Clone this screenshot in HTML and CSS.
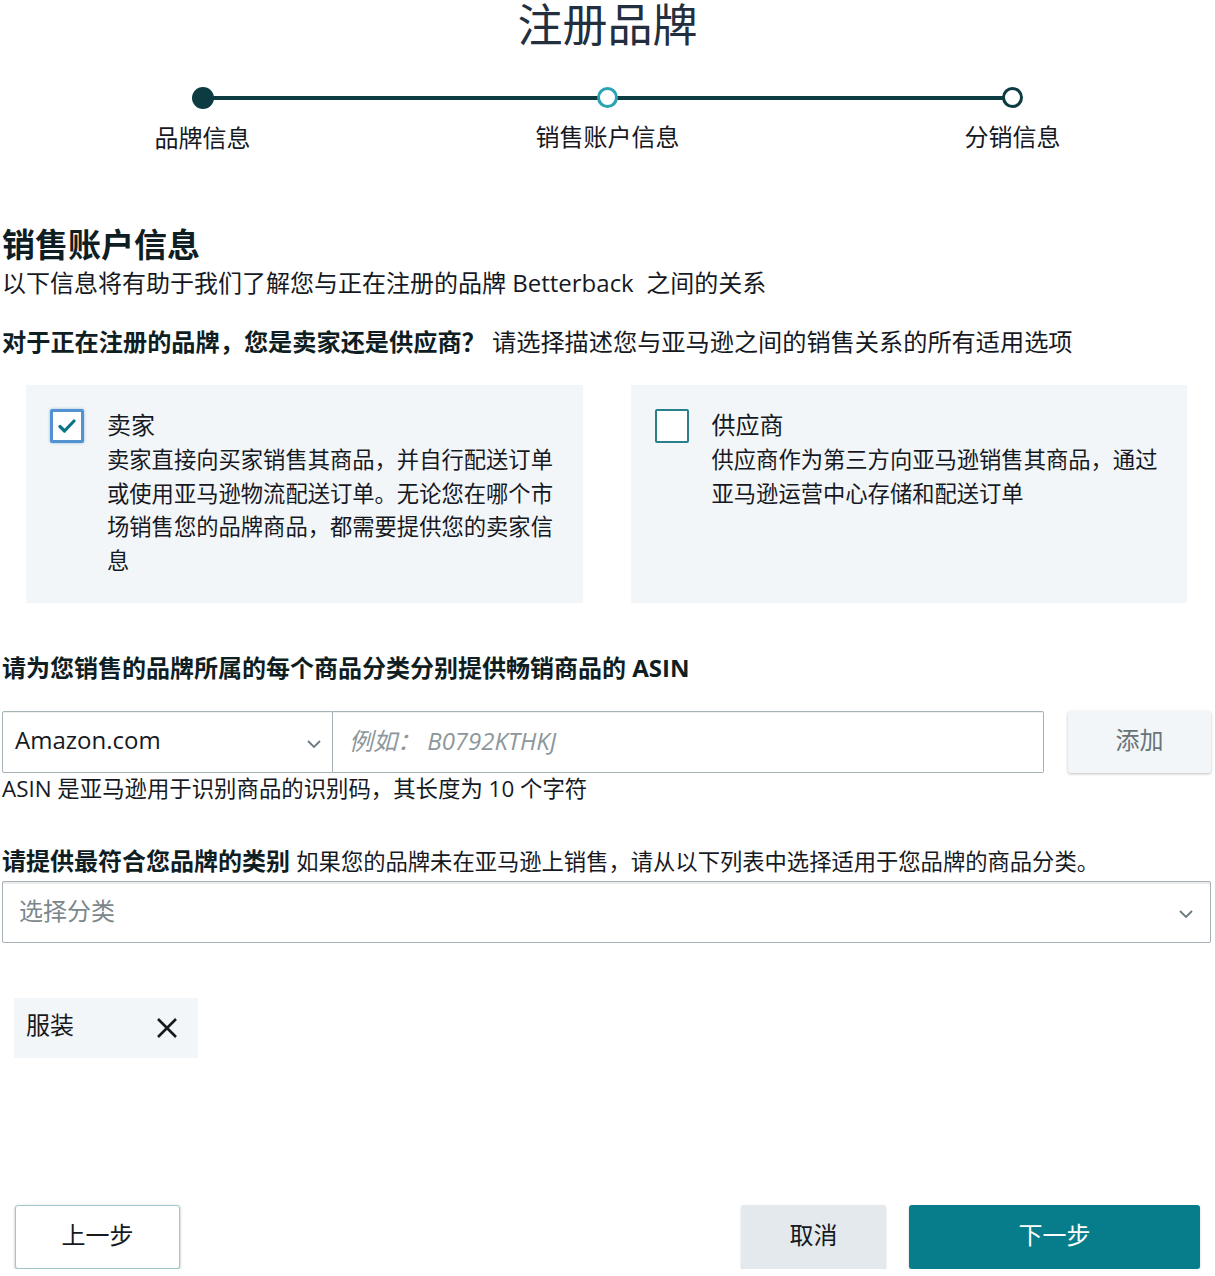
FILE: index.html
```html
<!DOCTYPE html>
<html lang="zh-CN">
<head>
<meta charset="utf-8">
<title>注册品牌</title>
<link rel="stylesheet" href="styles.css">
</head>
<body>
<div class="page">
  <h1 class="title">注册品牌</h1>

  <div class="stepper">
    <div class="step done"><span class="dot"></span><span class="step-label">品牌信息</span></div>
    <div class="step current"><span class="dot"></span><span class="step-label">销售账户信息</span></div>
    <div class="step todo"><span class="dot"></span><span class="step-label">分销信息</span></div>
  </div>

  <section class="form">
    <h2 class="section-title">销售账户信息</h2>
    <p class="subtitle">以下信息将有助于我们了解您与正在注册的品牌 Betterback&nbsp; 之间的关系</p>

    <p class="question"><strong>对于正在注册的品牌，您是卖家还是供应商？</strong> 请选择描述您与亚马逊之间的销售关系的所有适用选项</p>

    <div class="cards">
      <div class="card">
        <span class="checkbox checked">
          <svg viewBox="0 0 24 24" width="24" height="24"><path d="M5 12.5l4.5 4.5L19 7" fill="none" stroke="#0b7386" stroke-width="3.2" stroke-linecap="round" stroke-linejoin="round"/></svg>
        </span>
        <div class="card-body">
          <div class="card-title">卖家</div>
          <div class="card-desc">卖家直接向买家销售其商品，并自行配送订单或使用亚马逊物流配送订单。无论您在哪个市场销售您的品牌商品，都需要提供您的卖家信息</div>
        </div>
      </div>
      <div class="card">
        <span class="checkbox"></span>
        <div class="card-body">
          <div class="card-title">供应商</div>
          <div class="card-desc">供应商作为第三方向亚马逊销售其商品，通过亚马逊运营中心存储和配送订单</div>
        </div>
      </div>
    </div>

    <p class="question q-asin"><strong>请为您销售的品牌所属的每个商品分类分别提供畅销商品的 ASIN</strong></p>

    <div class="asin-row">
      <div class="field-group">
        <div class="select market">
          <span class="lift">Amazon.com</span>
          <svg class="chev" viewBox="0 0 16 10" width="16" height="10"><path d="M2 2l6 6 6-6" fill="none" stroke="#6b7a80" stroke-width="1.8"/></svg>
        </div>
        <div class="asin-input"><span class="placeholder lift">例如：&nbsp;B0792KTHKJ</span></div>
      </div>
      <button class="btn btn-add" type="button">添加</button>
    </div>
    <p class="help">ASIN 是亚马逊用于识别商品的识别码，其长度为 10 个字符</p>

    <p class="question q-cat"><strong>请提供最符合您品牌的类别</strong> <span class="q-note">如果您的品牌未在亚马逊上销售，请从以下列表中选择适用于您品牌的商品分类。</span></p>
    <div class="select category">
      <span class="placeholder-plain lift">选择分类</span>
      <svg class="chev" viewBox="0 0 16 10" width="16" height="10"><path d="M2 2l6 6 6-6" fill="none" stroke="#6b7a80" stroke-width="1.8"/></svg>
    </div>

    <div class="tags">
      <span class="tag"><span class="lift">服装</span>
        <svg class="tag-x" viewBox="0 0 22 22" width="22" height="22"><path d="M2 2l18 18M20 2L2 20" fill="none" stroke="#16191f" stroke-width="2.6"/></svg>
      </span>
    </div>

    <div class="actions">
      <button class="btn btn-prev" type="button">上一步</button>
      <div class="actions-right">
        <button class="btn btn-cancel" type="button">取消</button>
        <button class="btn btn-next" type="button">下一步</button>
      </div>
    </div>
  </section>
</div>
</body>
</html>
```

FILE: styles.css
```css
html, body {
  margin: 0;
  padding: 0;
  background: #ffffff;
}

body {
  font-family: "Open Sans", "Noto Sans CJK SC", sans-serif;
  color: #16191f;
  font-size: 24px;
}

.page {
  width: 1215px;
}

.title {
  margin: 0;
  padding-top: 5px;
  font-size: 45px;
  line-height: 40px;
  font-weight: 400;
  text-align: center;
  color: #232f3e;
}

.stepper {
  position: relative;
  display: grid;
  grid-template-columns: 1fr 1fr 1fr;
  margin-top: 42px;
}

.stepper::before {
  content: "";
  position: absolute;
  top: 9px;
  left: 16.7%;
  right: 16.7%;
  height: 4px;
  background: #0d3b42;
}

.step {
  display: flex;
  flex-direction: column;
  align-items: center;
}

.dot {
  position: relative;
  z-index: 1;
  box-sizing: border-box;
  width: 22px;
  height: 22px;
  border-radius: 50%;
  background: #ffffff;
}

.step.done .dot {
  background: #0d3b42;
}

.step.current .dot {
  width: 21px;
  height: 21px;
  border: 3px solid #2aa3b3;
}

.step.todo .dot {
  width: 21px;
  height: 21px;
  border: 3px solid #0d3b42;
}

.step-label {
  margin-top: 14px;
  font-size: 24px;
  line-height: 30px;
  color: #16191f;
}

.form {
  padding: 0 4px 0 2px;
}

.section-title {
  margin: 72px 0 0;
  font-size: 33px;
  line-height: 40px;
  font-weight: 700;
  color: #0f1e23;
}

.subtitle {
  margin: 2px 0 0;
  font-size: 24px;
  line-height: 32px;
}

.question {
  margin: 27px 0 0;
  font-size: 24.2px;
  line-height: 32px;
}

.question strong {
  font-weight: 700;
  color: #0f1e23;
}

.cards {
  display: flex;
  gap: 48px;
  padding: 0 24px;
  margin-top: 27px;
}

.card {
  flex: 1;
  display: flex;
  gap: 23px;
  background: #f3f6f8;
  padding: 22px 24px 26px;
}

.checkbox {
  flex: none;
  box-sizing: border-box;
  width: 34px;
  height: 34px;
  margin-top: 2px;
  border: 2px solid #2b7f8c;
  border-radius: 2px;
  background: #ffffff;
  display: flex;
  align-items: center;
  justify-content: center;
}

.checkbox.checked {
  border: 3px solid #5292cf;
  box-shadow: 0 0 3px rgba(82, 146, 207, 0.6);
}

.card-title {
  font-size: 24px;
  line-height: 34px;
  margin-top: 1px;
}

.card-desc {
  font-size: 22.3px;
  line-height: 33.5px;
  margin-top: 1px;
}

.q-asin {
  margin-top: 49px;
  font-size: 24px;
}

.asin-row {
  display: flex;
  gap: 24px;
  margin-top: 27px;
  height: 62px;
}

.field-group {
  display: flex;
  width: 1043px;
}

.lift {
  position: relative;
  top: -3px;
}

.select {
  box-sizing: border-box;
  display: flex;
  align-items: center;
  justify-content: space-between;
  border: 1px solid #a6b2b5;
  border-radius: 2px;
  background: #ffffff;
  box-shadow: inset 0 1px 0 rgba(0, 0, 0, 0.06);
}

.market {
  width: 331px;
  padding: 0 10px 0 12px;
  border-radius: 2px 0 0 2px;
}

.chev {
  margin-top: 4px;
}

.asin-input {
  box-sizing: border-box;
  flex: 1;
  display: flex;
  align-items: center;
  border: 1px solid #a6b2b5;
  border-left: none;
  border-radius: 0 2px 2px 0;
  padding-left: 16px;
  box-shadow: inset 0 1px 0 rgba(0, 0, 0, 0.06);
}

.placeholder {
  font-style: italic;
  color: #8d979b;
}

.btn {
  font-family: "Open Sans", "Noto Sans CJK SC", sans-serif;
  font-size: 24px;
  border: none;
  border-radius: 3px;
  cursor: pointer;
  padding: 0 0 7px;
}

.btn-add {
  width: 143px;
  background: #f3f6f8;
  color: #687478;
  box-shadow: 0 1px 3px rgba(0, 0, 0, 0.25);
}

.help {
  margin: 3px 0 0;
  font-size: 22.4px;
  line-height: 26px;
}

.q-cat {
  margin-top: 43px;
}

.q-cat strong {
  font-size: 24px;
}

.q-note {
  font-size: 22.3px;
}

.category {
  margin-top: 3px;
  height: 62px;
  padding: 0 16px 0 16px;
  border: 1px solid #a6b2b5;
  box-shadow: inset 0 2px 0 rgba(0, 0, 0, 0.08);
}

.placeholder-plain {
  color: #7b878b;
}

.tags {
  margin-top: 55px;
  padding-left: 12px;
}

.tag {
  box-sizing: border-box;
  display: inline-flex;
  align-items: center;
  justify-content: space-between;
  width: 184px;
  height: 60px;
  padding: 0 20px 0 12px;
  background: #f3f6f8;
  line-height: 30px;
}

.actions {
  display: flex;
  justify-content: space-between;
  align-items: center;
  margin-top: 147px;
  padding: 0 11px 0 13px;
}

.actions-right {
  display: flex;
  gap: 23px;
}

.btn-prev {
  width: 165px;
  height: 64px;
  background: #ffffff;
  color: #16191f;
  border: 1px solid #9fc6cb;
  box-shadow: 0 1px 3px rgba(0, 0, 0, 0.3);
}

.btn-cancel {
  width: 145px;
  height: 64px;
  background: #e3e9ec;
  color: #16191f;
  box-shadow: 0 1px 2px rgba(0, 0, 0, 0.2);
}

.btn-next {
  width: 291px;
  height: 64px;
  background: #077d8c;
  color: #ffffff;
  box-shadow: 0 1px 2px rgba(0, 0, 0, 0.25);
}
```
